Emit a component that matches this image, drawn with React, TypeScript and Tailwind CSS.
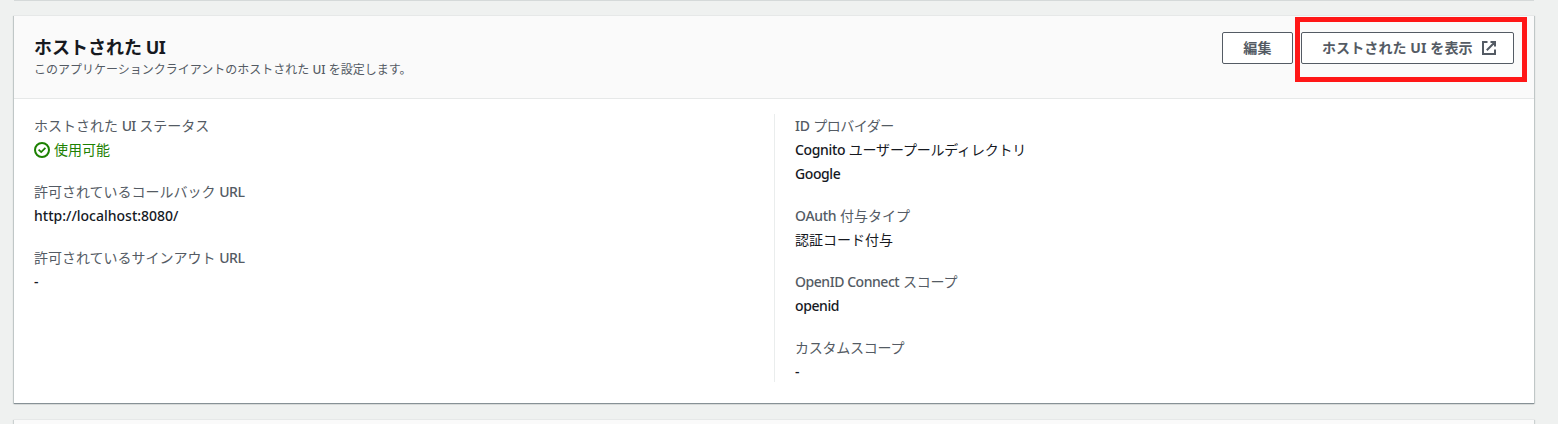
import type { ReactNode } from 'react';

function En({ children, className = '' }: { children: ReactNode; className?: string }) {
  return <span className={`font-medium ${className}`}>{children}</span>;
}

function Field({ label, children }: { label: ReactNode; children: ReactNode }) {
  return (
    <div>
      <div className="h-6 text-[#545b64]">{label}</div>
      <div className="text-[#16191f]">{children}</div>
    </div>
  );
}

function ExternalIcon() {
  return (
    <svg className="size-4" viewBox="0 0 16 16" fill="none" stroke="currentColor" strokeWidth="2">
      <path d="M9.5 2H14v4.5M5.8 10.2 14 2M14 9.5V14H2V2h4.5" />
    </svg>
  );
}

function CheckIcon() {
  return (
    <svg className="size-4" viewBox="0 0 16 16" fill="none" stroke="currentColor" strokeWidth="2">
      <circle cx="8" cy="8" r="7" />
      <path d="m4.6 7.6 2.6 2.5 4.2-4.2" strokeWidth="1.8" />
    </svg>
  );
}

export default function App() {
  return (
    <div className="h-[424px] w-[1558px] overflow-hidden bg-[#eff1f0] pl-[14px] font-['Noto_Sans','Noto_Sans_CJK_JP',sans-serif] text-[14px] leading-6">
      <div className="h-px w-[1520px] bg-[#d5d9d9]" />
      <section className="mt-[14px] h-[388px] w-[1520px] bg-white shadow-[0_1px_0_0_#879196,0_1px_1px_0_rgba(0,28,36,0.3),1px_1px_1px_0_rgba(0,28,36,0.15),-1px_1px_1px_0_rgba(0,28,36,0.15)]">
        <header className="flex h-[84px] justify-between border-y border-[#e6e8e8] bg-[#fafafa] pr-5 pl-5">
          <div className="pt-[19px]">
            <h2 className="text-[18px] leading-[24px] font-bold whitespace-nowrap text-[#16191f]">
              ホストされた <span className="-ml-px tracking-[-0.6px]">UI</span>
            </h2>
            <p className="pt-px text-[12px] leading-[20px] whitespace-nowrap text-[#545b64]">
              このアプリケーションクライアントのホストされた <En>UI</En> を設定します。
            </p>
          </div>
          <div className="relative flex gap-2 pt-4 font-bold text-[#545b64]">
            <button className="h-8 w-[71px] rounded-[2px] border border-[#545b64] bg-white tracking-[0.25px]">
              編集
            </button>
            <button className="flex h-8 w-[213px] items-center justify-between rounded-[2px] border border-[#545b64] bg-white pr-4 pl-5">
              <span className="tracking-[0.1px] whitespace-nowrap">ホストされた UI を表示</span>
              <ExternalIcon />
            </button>
            <div className="pointer-events-none absolute top-px -right-[13px] h-[65px] w-[232px] border-[5px] border-[#ff1717]" />
          </div>
        </header>
        <div className="flex pt-[15px]">
          <div className="flex w-[760px] flex-col gap-[18px] pl-5">
            <Field label={<>ホストされた <En className="tracking-[-0.6px]">UI</En> ステータス</>}>
              <span className="flex items-center gap-1 text-[#1d8102]">
                <CheckIcon />
                使用可能
              </span>
            </Field>
            <Field label={<>許可されているコールバック <En className="tracking-[-0.5px]">URL</En></>}>
              <En>http://localhost:8080/</En>
            </Field>
            <Field label={<>許可されているサインアウト <En className="tracking-[-0.5px]">URL</En></>}>
              <En>-</En>
            </Field>
          </div>
          <div className="flex h-[268px] flex-col gap-[18px] border-l border-[#eaeded] pl-5">
            <Field label={<><En className="tracking-[-0.3px]">ID</En> <span className="tracking-[-0.5px]">プロバイダー</span></>}>
              <div>
                <En className="tracking-[-0.35px]">Cognito</En>{' '}
                <span className="tracking-[-0.2px]">ユーザープールディレクトリ</span>
              </div>
              <div><En className="tracking-[-0.4px]">Google</En></div>
            </Field>
            <Field label={<><En className="tracking-[-0.3px]">OAuth</En> 付与タイプ</>}>認証コード付与</Field>
            <Field
              label={<><En className="tracking-[-0.45px]">OpenID Connect</En> <span className="tracking-[-0.2px]">スコープ</span></>}
            >
              <En className="tracking-[-0.4px]">openid</En>
            </Field>
            <Field label={<span className="tracking-[-0.25px]">カスタムスコープ</span>}>
              <En>-</En>
            </Field>
          </div>
        </div>
      </section>
      <section className="mt-4 h-5 w-[1520px] border-t border-[#e6e8e8] bg-[#fafafa] shadow-[1px_1px_1px_0_rgba(0,28,36,0.15),-1px_1px_1px_0_rgba(0,28,36,0.15)]" />
    </div>
  );
}
